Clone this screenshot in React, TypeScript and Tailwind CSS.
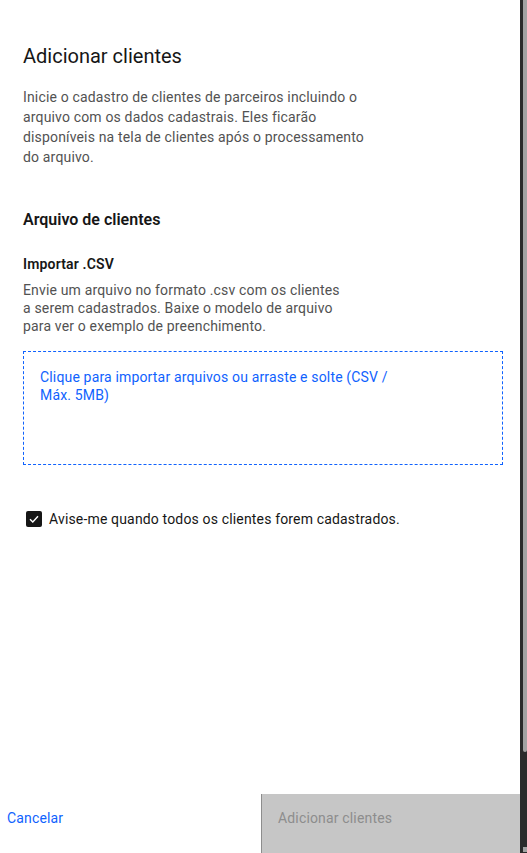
import React from "react";

export default function App() {
  const font = { fontFamily: "Roboto, 'Noto Sans', Arial, sans-serif" };
  return (
    <div className="flex h-[853px] w-[527px] overflow-hidden bg-white" style={font}>
      <div className="flex flex-1 flex-col">
        <div className="flex-1 pl-[23px] pt-[42px]">
          <h1 className="text-[20px] leading-[28px] font-normal text-[#161616]">Adicionar clientes</h1>
          <p className="mt-[17px] w-[350px] text-[14px] leading-[20px] tracking-[0.16px] text-[#525252]">
            Inicie o cadastro de clientes de parceiros incluindo o arquivo com os dados cadastrais. Eles ficarão disponíveis na tela de clientes após o processamento do arquivo.
          </p>
          <h2 className="mt-[41px] text-[16px] leading-[24px] font-semibold text-[#161616]">Arquivo de clientes</h2>
          <h3 className="mt-[23px] text-[14px] leading-[18px] font-semibold tracking-[0.16px] text-[#161616]">Importar .CSV</h3>
          <p className="mt-[8px] w-[322px] text-[14px] leading-[18px] tracking-[0.16px] text-[#525252]">
            Envie um arquivo no formato .csv com os clientes a serem cadastrados. Baixe o modelo de arquivo para ver o exemplo de preenchimento.
          </p>
          <div className="mt-[16px] h-[114px] w-[480px] border border-dashed border-[#0f62fe] pl-[16px] pt-[16px]">
            <p className="w-[360px] text-[14px] leading-[18px] tracking-[0.16px] text-[#0f62fe]">
              Clique para importar arquivos ou arraste e solte (CSV / Máx. 5MB)
            </p>
          </div>
          <label className="mt-[45px] ml-[3px] flex items-center gap-[7px]">
            <span className="flex h-[16px] w-[16px] items-center justify-center rounded-[2px] bg-[#161616]">
              <svg width="10" height="8" viewBox="0 0 10 8" fill="none">
                <path d="M1 4.2 L3.8 7 L9 1.2" stroke="white" strokeWidth="1.4" />
              </svg>
            </span>
            <span className="text-[14px] leading-[18px] tracking-[0.16px] text-[#161616]">
              Avise-me quando todos os clientes forem cadastrados.
            </span>
          </label>
        </div>
        <div className="flex h-[59px]">
          <div className="w-[261px] pl-[7px] pt-[15px] text-[14px] leading-[18px] tracking-[0.16px] text-[#0f62fe]">Cancelar</div>
          <div className="flex-1 border-l border-[#8d8d8d] bg-[#c6c6c6] pl-[16px] pt-[15px] text-[14px] leading-[18px] tracking-[0.16px] text-[#8d8d8d]">
            Adicionar clientes
          </div>
        </div>
      </div>
      <div className="relative flex w-[7px] flex-col bg-[#2b2b2b]">
        <div className="ml-[3px] h-[752px] w-[4px] rounded-b-[2px] bg-[#a3a3a3]" />
        <div className="absolute bottom-[1px] right-0 h-[5px] w-[4px] bg-[#a3a3a3]" />
      </div>
    </div>
  );
}
